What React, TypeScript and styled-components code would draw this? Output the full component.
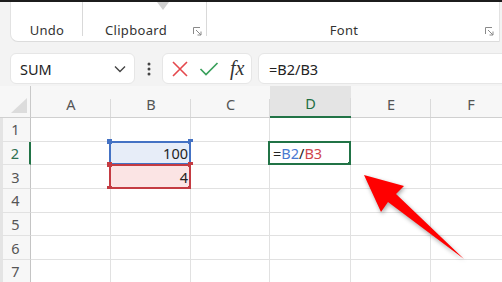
import React from "react";
import styled, { createGlobalStyle } from "styled-components";

const GlobalStyle = createGlobalStyle`
  html, body { margin: 0; padding: 0; background: #f3f3f3; }
  * { box-sizing: border-box; }
`;

const FONT = `"Noto Sans", "Open Sans", "Liberation Sans", sans-serif`;

const Screen = styled.div`
  position: relative;
  width: 502px;
  height: 282px;
  overflow: hidden;
  background: #f3f3f3;
  font-family: ${FONT};
  display: flex;
  flex-direction: column;
`;

const TopLine = styled.div`
  height: 2px;
  flex: none;
  background: #1c1c1c;
`;

const RibbonWrap = styled.div`
  position: relative;
  flex: none;
  height: 40px;
  padding: 0 2px 0 10px;
`;

const Ribbon = styled.div`
  display: flex;
  height: 100%;
  background: #ffffff;
  border-left: 1px solid #e2e2e2;
  border-right: 1px solid #e2e2e2;
  border-bottom: 1px solid #dcdcdc;
  border-bottom-left-radius: 8px;
`;

const Group = styled.div<{ $w?: number; $sep?: boolean; $pr?: number }>`
  position: relative;
  flex: ${(p) => (p.$w ? `0 0 ${p.$w}px` : "1")};
  display: flex;
  align-items: flex-end;
  justify-content: center;
  padding: 0 ${(p) => p.$pr || 0}px 2px 0;
  font-size: 13px;
  color: #333;
  letter-spacing: 0.3px;
  &::after {
    content: "";
    display: ${(p) => (p.$sep ? "block" : "none")};
    position: absolute;
    right: 0;
    top: 0;
    height: 34px;
    width: 1px;
    background: #d9d9d9;
  }
`;

const Launcher = styled.svg`
  position: absolute;
  right: 5px;
  bottom: 5px;
`;

const Notch = styled.svg`
  position: absolute;
  left: 157px;
  top: 0;
`;

const FormulaRow = styled.div`
  flex: none;
  display: flex;
  align-items: center;
  height: 31px;
  margin-top: 11px;
  margin-bottom: 2px;
  padding-left: 10px;
`;

const NameBox = styled.div`
  flex: 0 0 125px;
  height: 100%;
  display: flex;
  align-items: center;
  justify-content: space-between;
  padding: 0 8px 0 9px;
  background: #fff;
  border: 1px solid #e6e6e6;
  border-radius: 6px;
  font-size: 14.5px;
  color: #222;
`;

const Dots = styled.div`
  flex: 0 0 27px;
  display: flex;
  justify-content: center;
`;

const IconBox = styled.div`
  flex: 0 0 90px;
  height: 100%;
  display: flex;
  align-items: center;
  gap: 10px;
  padding-left: 8px;
  background: #fff;
  border: 1px solid #e6e6e6;
  border-radius: 6px;
`;

const Fx = styled.span`
  font-family: "Liberation Serif", "DejaVu Serif", serif;
  font-style: italic;
  font-size: 20px;
  color: #333;
  margin-left: 1px;
`;

const FormulaInput = styled.div`
  flex: 1;
  height: 100%;
  margin-left: 6px;
  margin-right: -8px;
  display: flex;
  align-items: center;
  padding-left: 10px;
  background: #fff;
  border: 1px solid #e6e6e6;
  border-radius: 6px;
  font-size: 14.5px;
  color: #222;
`;

const Sheet = styled.div`
  flex: none;
  display: grid;
  grid-template-columns: 31px 80px 80px 79px 81px 80px 80px;
  grid-template-rows: 32px repeat(7, 23.7px);
  background: #fff;
`;

const Corner = styled.div`
  background: #f7f7f7;
  border-right: 1px solid #c9c9c9;
  border-bottom: 1px solid #d0d0d0;
  display: flex;
  align-items: flex-end;
  justify-content: flex-end;
  padding: 0 3px 4px 0;
`;

const ColHead = styled.div<{ $active?: boolean }>`
  position: relative;
  display: flex;
  align-items: flex-end;
  justify-content: center;
  padding-bottom: 3px;
  font-size: 14.5px;
  color: ${(p) => (p.$active ? "#1e6e42" : "#555")};
  background: ${(p) => (p.$active ? "#e4e4e4" : "#f7f7f7")};
  border-bottom: ${(p) => (p.$active ? "2px solid #217346" : "1px solid #d0d0d0")};
  &::after {
    content: "";
    position: absolute;
    right: 0;
    bottom: 0;
    height: 18px;
    width: 1px;
    background: #dadada;
  }
`;

const RowHead = styled.div<{ $active?: boolean }>`
  display: flex;
  align-items: center;
  justify-content: center;
  padding-right: 2px;
  font-size: 14.5px;
  color: ${(p) => (p.$active ? "#2e7050" : "#555")};
  background: #f7f7f7;
  border-left: 3px solid #e4e4e4;
  border-bottom: 1px solid #e2e2e2;
  border-right: ${(p) => (p.$active ? "2px solid #217346" : "1px solid #c4c4c4")};
`;

const Cell = styled.div<{ $fill?: string; $align?: string }>`
  position: relative;
  display: flex;
  align-items: center;
  justify-content: ${(p) => p.$align || "flex-start"};
  padding: 0 2px 0 3px;
  font-size: 14.5px;
  color: #222;
  background: ${(p) => p.$fill || "#fff"};
  border-right: 1px solid #e1e1e1;
  border-bottom: 1px solid #e1e1e1;
`;

const RangeBox = styled.div<{ $c: string; $w?: number }>`
  position: absolute;
  left: -2px;
  top: -1px;
  right: -1px;
  bottom: -1px;
  border: ${(p) => p.$w || 2}px solid ${(p) => p.$c};
  pointer-events: none;
`;

const Handle = styled.span<{ $c: string; $x: "l" | "r"; $y: "t" | "b" }>`
  position: absolute;
  width: 5px;
  height: 5px;
  background: ${(p) => p.$c};
  ${(p) => (p.$x === "l" ? "left: -4px;" : "right: -4px;")}
  ${(p) => (p.$y === "t" ? "top: -4px;" : "bottom: -4px;")}
`;

const Ref = styled.span<{ $c: string }>`
  color: ${(p) => p.$c};
`;

const ArrowLayer = styled.svg`
  position: absolute;
  left: 0;
  top: 0;
  pointer-events: none;
  filter: drop-shadow(1px 2px 2px rgba(0, 0, 0, 0.35));
`;

const BLUE = "#4472c4";
const RED = "#c43b42";
const GREEN = "#217346";

const LauncherIcon = () => (
  <Launcher width="9" height="9" viewBox="0 0 9 9">
    <path d="M0.5 7V0.5H7" stroke="#8a8a8a" fill="none" strokeWidth="1" />
    <path d="M3 3L8 8M8 4.5V8H4.5" stroke="#8a8a8a" fill="none" strokeWidth="1" />
  </Launcher>
);

const cols = ["A", "B", "C", "D", "E", "F"];

export default function App() {
  const rows = [1, 2, 3, 4, 5, 6, 7];
  const renderCell = (r: number, c: string) => {
    if (r === 2 && c === "B")
      return (
        <Cell key={c + r} $fill="#e7edf8" $align="flex-end">
          100
          <RangeBox $c={BLUE}>
            <Handle $c={BLUE} $x="l" $y="t" />
            <Handle $c={BLUE} $x="r" $y="t" />
          </RangeBox>
        </Cell>
      );
    if (r === 3 && c === "B")
      return (
        <Cell key={c + r} $fill="#fbe4e4" $align="flex-end">
          4
          <RangeBox $c={RED}>
            <Handle $c={RED} $x="l" $y="t" />
            <Handle $c={RED} $x="r" $y="t" />
            <Handle $c={RED} $x="l" $y="b" />
            <Handle $c={RED} $x="r" $y="b" />
          </RangeBox>
        </Cell>
      );
    if (r === 2 && c === "D")
      return (
        <Cell key={c + r}>
          <span>
            =<Ref $c="#4a79d0">B2</Ref>/<Ref $c="#d0454c">B3</Ref>
          </span>
          <RangeBox $c={GREEN}>
            <Handle $c={GREEN} $x="r" $y="b" />
          </RangeBox>
        </Cell>
      );
    return <Cell key={c + r} />;
  };

  return (
    <Screen>
      <GlobalStyle />
      <TopLine />
      <RibbonWrap>
        <Ribbon>
          <Group $w={72} $sep>
            Undo
          </Group>
          <Group $w={124} $sep $pr={18}>
            Clipboard
            <LauncherIcon />
          </Group>
          <Group $pr={18}>
            Font
            <LauncherIcon />
          </Group>
        </Ribbon>
        <Notch width="12" height="10" viewBox="0 0 12 10">
          <path d="M0 0H12L6 8Z" fill="#d0d0d0" />
        </Notch>
      </RibbonWrap>
      <FormulaRow>
        <NameBox>
          SUM
          <svg width="12" height="8" viewBox="0 0 12 8">
            <path d="M1 1.5L6 6.5L11 1.5" stroke="#444" strokeWidth="1.4" fill="none" />
          </svg>
        </NameBox>
        <Dots>
          <svg width="4" height="14" viewBox="0 0 4 14">
            <circle cx="2" cy="2" r="1.5" fill="#444" />
            <circle cx="2" cy="7" r="1.5" fill="#444" />
            <circle cx="2" cy="12" r="1.5" fill="#444" />
          </svg>
        </Dots>
        <IconBox>
          <svg width="18" height="18" viewBox="0 0 18 18">
            <path d="M2 2L16 16M16 2L2 16" stroke="#e5484d" strokeWidth="1.6" fill="none" />
          </svg>
          <svg width="20" height="16" viewBox="0 0 20 16">
            <path d="M1.5 8L7 13.5L18.5 2" stroke="#3aa05c" strokeWidth="1.7" fill="none" />
          </svg>
          <Fx>fx</Fx>
        </IconBox>
        <FormulaInput>=B2/B3</FormulaInput>
      </FormulaRow>
      <Sheet>
        <Corner>
          <svg width="16" height="15" viewBox="0 0 16 15">
            <path d="M16 0V15H0Z" fill="#dcdcdc" />
          </svg>
        </Corner>
        {cols.map((c) => (
          <ColHead key={c} $active={c === "D"}>
            {c}
          </ColHead>
        ))}
        {rows.map((r) => (
          <React.Fragment key={r}>
            <RowHead $active={r === 2}>{r}</RowHead>
            {cols.map((c) => renderCell(r, c))}
          </React.Fragment>
        ))}
      </Sheet>
      <ArrowLayer width="502" height="282" viewBox="0 0 502 282">
        <polygon
          points="364,175 404,186 396,194 464,259 388,202 381,212"
          fill="#ff0000"
        />
      </ArrowLayer>
    </Screen>
  );
}
